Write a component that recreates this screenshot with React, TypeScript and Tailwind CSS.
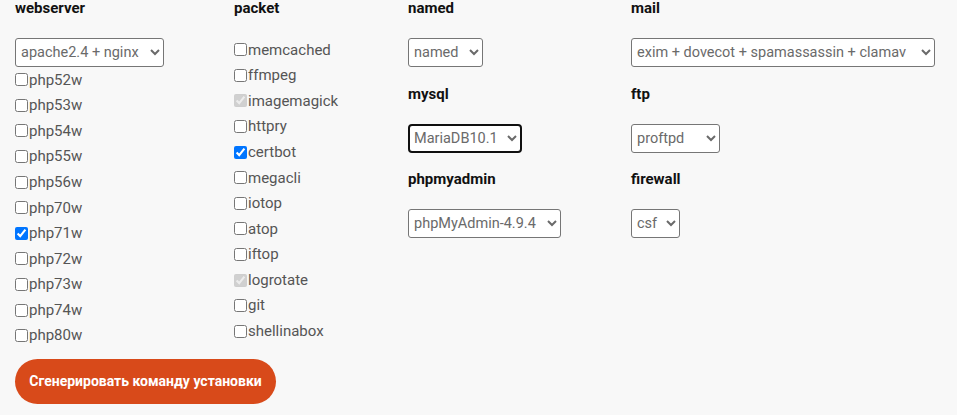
import type { ReactNode } from "react";

const phpVersions = [
  { name: "php52w" },
  { name: "php53w" },
  { name: "php54w" },
  { name: "php55w" },
  { name: "php56w" },
  { name: "php70w" },
  { name: "php71w", checked: true },
  { name: "php72w" },
  { name: "php73w" },
  { name: "php74w" },
  { name: "php80w" },
];

const packets = [
  { name: "memcached" },
  { name: "ffmpeg" },
  { name: "imagemagick", checked: true, disabled: true },
  { name: "httpry" },
  { name: "certbot", checked: true },
  { name: "megacli" },
  { name: "iotop" },
  { name: "atop" },
  { name: "iftop" },
  { name: "logrotate", checked: true, disabled: true },
  { name: "git" },
  { name: "shellinabox" },
];

function Heading({ children }: { children: ReactNode }) {
  return <div className="h-[17px] leading-[17px] text-[15px] font-bold text-[#111]">{children}</div>;
}

function Check({ name, checked, disabled }: { name: string; checked?: boolean; disabled?: boolean }) {
  return (
    <label className="flex items-center h-[25.6px]">
      <input type="checkbox" defaultChecked={checked} disabled={disabled} className="m-0 w-[13px] h-[13px]" />
      <span className="ml-px">{name}</span>
    </label>
  );
}

// select keeps the native chrome arrow; preflight strips the border so put it back
function Select({ options, className }: { options: string[]; className: string }) {
  return (
    <select className={"h-[29px] pr-0 text-[14.5px] text-[#6a6a6a] bg-white " + className}>
      {options.map(o => <option key={o}>{o}</option>)}
    </select>
  );
}

function Group({ title, children }: { title: string; children: ReactNode }) {
  return (
    <div className="pb-[18.5px]">
      <Heading>{title}</Heading>
      <div className="mt-[21px] flex">{children}</div>
    </div>
  );
}

export default function App() {
  return (
    <div className="min-h-[415px] bg-[#f8f8f8] pl-[15px] font-['Roboto',sans-serif] text-[15px] text-[#555]">
      <div className="flex">
        <div className="w-[219px] shrink-0">
          <Heading>webserver</Heading>
          <div className="mt-[21px] flex">
            <Select className="w-[149px] pl-px border border-[#767676] rounded-[3px]" options={["apache2.4 + nginx", "nginx", "apache2.4"]} />
          </div>
          <div>
            {phpVersions.map(p => <Check key={p.name} {...p} />)}
          </div>
        </div>

        <div className="w-[174px] shrink-0">
          <Heading>packet</Heading>
          <div className="mt-[20px]">
            {packets.map(p => <Check key={p.name} {...p} />)}
          </div>
        </div>

        <div className="w-[223px] shrink-0">
          <Group title="named">
            <Select className="w-[75px] pl-px border border-[#767676] rounded-[3px]" options={["named", "none"]} />
          </Group>
          <Group title="mysql">
            <Select className="w-[114px] pl-0 border-2 border-[#101010] rounded-[4px]" options={["MariaDB10.1", "MariaDB10.2", "MySQL5.7"]} />
          </Group>
          <Group title="phpmyadmin">
            <Select className="w-[153px] pl-px border border-[#767676] rounded-[3px]" options={["phpMyAdmin-4.9.4", "none"]} />
          </Group>
        </div>

        <div className="flex-1">
          <Group title="mail">
            <Select className="w-[304px] pl-px border border-[#767676] rounded-[3px]" options={["exim + dovecot + spamassassin + clamav", "none"]} />
          </Group>
          <Group title="ftp">
            <Select className="w-[89px] pl-px border border-[#767676] rounded-[3px]" options={["proftpd", "vsftpd", "none"]} />
          </Group>
          <Group title="firewall">
            <Select className="w-[49px] pl-px border border-[#767676] rounded-[3px]" options={["csf", "none"]} />
          </Group>
        </div>
      </div>

      <button className="mt-[10px] h-[45px] w-[261px] rounded-full bg-[#d84a1a] text-white text-[14px] font-bold">
        Сгенерировать команду установки
      </button>
    </div>
  );
}
